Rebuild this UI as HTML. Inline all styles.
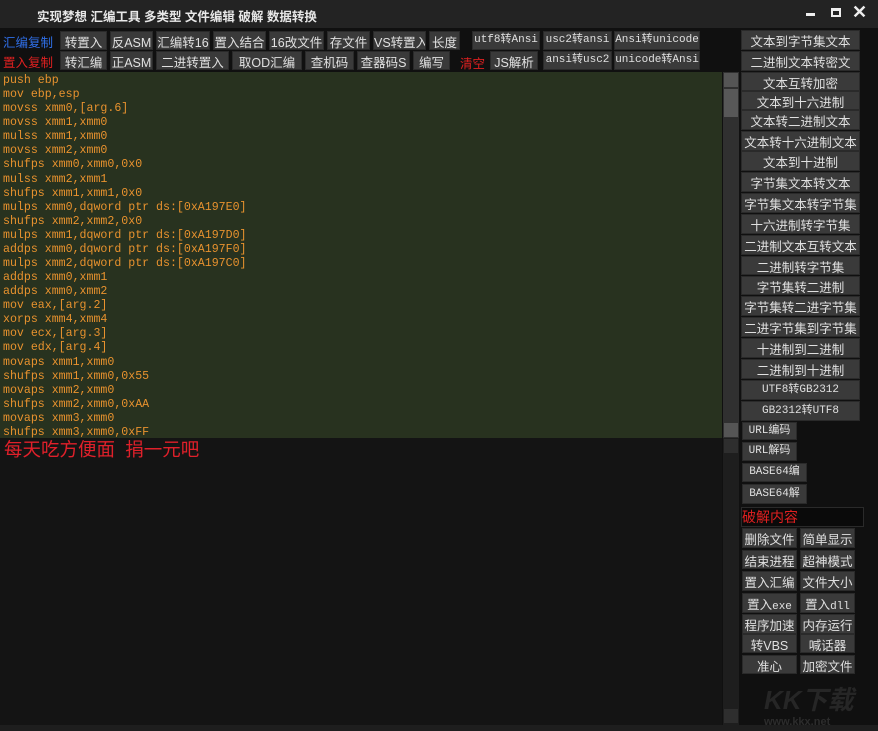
<!DOCTYPE html>
<html><head><meta charset="utf-8"><style>
*{margin:0;padding:0;box-sizing:border-box}
body{width:878px;height:731px;background:#101010;position:relative;overflow:hidden;font-family:"Liberation Sans","Noto Sans CJK SC",sans-serif;color:#ddd}
.b{position:absolute;background:#3a3a3a;color:#e0e0e0;font-size:12.5px;text-align:center;white-space:nowrap;overflow:hidden;border:1px solid #2a2a2a}
.m{font-family:"Liberation Mono","Noto Sans CJK SC",monospace;font-size:11px}
#title{position:absolute;left:0;top:0;width:878px;height:28px;background:#232323;font-weight:bold;font-size:12.5px;color:#e8e8e8;padding:6px 0 0 37px}
#code{position:absolute;left:0;top:72px;width:722px;height:366px;background:#28321f;color:#e8922e;font-family:"Liberation Mono","Noto Sans CJK SC",monospace;font-size:11.6px;line-height:14.08px;padding:2px 0 0 3px;white-space:pre}
#low{position:absolute;left:0;top:438px;width:722px;height:287px;background:#141414;color:#e0202a;font-size:18.5px;padding:0 0 0 4px;line-height:24px;white-space:pre}
.sb{position:absolute;left:723px;width:16px;background:#2a2a2a}
</style></head><body>
<div id="title">实现梦想 汇编工具 多类型 文件编辑 破解 数据转换</div>
<div style="position:absolute;left:806px;top:13px;width:9px;height:3px;background:#eee"></div>
<div style="position:absolute;left:831px;top:8px;width:10px;height:9px;border:2px solid #eee;border-top-width:3px"></div>
<div style="position:absolute;left:852px;top:2px;color:#eee;font-size:18px;font-weight:bold">✕</div>

<div style="position:absolute;left:3px;top:32px;font-size:12.5px;color:#2f6fe8">汇编复制</div>
<div style="position:absolute;left:3px;top:52px;font-size:12.5px;color:#e02020">置入复制</div>
<div class="b" style="left:60px;top:31px;width:47px;height:19px">转置入</div>
<div class="b" style="left:110px;top:31px;width:43px;height:19px">反ASM</div>
<div class="b" style="left:156px;top:31px;width:54px;height:19px">汇编转16</div>
<div class="b" style="left:213px;top:31px;width:53px;height:19px">置入结合</div>
<div class="b" style="left:269px;top:31px;width:55px;height:19px">16改文件</div>
<div class="b" style="left:327px;top:31px;width:43px;height:19px">存文件</div>
<div class="b" style="left:373px;top:31px;width:53px;height:19px">VS转置入</div>
<div class="b" style="left:429px;top:31px;width:31px;height:19px">长度</div>
<div class="b m" style="left:472px;top:31px;width:68px;height:19px;line-height:17px">utf8转Ansi</div>
<div class="b m" style="left:543px;top:31px;width:69px;height:19px;line-height:17px">usc2转ansi</div>
<div class="b m" style="left:614px;top:31px;width:86px;height:19px;line-height:17px">Ansi转unicode</div>

<div class="b" style="left:60px;top:51px;width:47px;height:19px">转汇编</div>
<div class="b" style="left:110px;top:51px;width:43px;height:19px">正ASM</div>
<div class="b" style="left:156px;top:51px;width:73px;height:19px">二进转置入</div>
<div class="b" style="left:232px;top:51px;width:70px;height:19px">取OD汇编</div>
<div class="b" style="left:305px;top:51px;width:49px;height:19px">查机码</div>
<div class="b" style="left:357px;top:51px;width:53px;height:19px">查器码S</div>
<div class="b" style="left:413px;top:51px;width:37px;height:19px">编写</div>
<div style="position:absolute;left:460px;top:53px;font-size:12.5px;color:#e02020">清空</div>
<div class="b" style="left:490px;top:51px;width:48px;height:19px">JS解析</div>
<div class="b m" style="left:543px;top:51px;width:69px;height:19px;line-height:17px">ansi转usc2</div>
<div class="b m" style="left:614px;top:51px;width:86px;height:19px;line-height:17px">unicode转Ansi</div>

<div id="code">push ebp
mov ebp,esp
movss xmm0,[arg.6]
movss xmm1,xmm0
mulss xmm1,xmm0
movss xmm2,xmm0
shufps xmm0,xmm0,0x0
mulss xmm2,xmm1
shufps xmm1,xmm1,0x0
mulps xmm0,dqword ptr ds:[0xA197E0]
shufps xmm2,xmm2,0x0
mulps xmm1,dqword ptr ds:[0xA197D0]
addps xmm0,dqword ptr ds:[0xA197F0]
mulps xmm2,dqword ptr ds:[0xA197C0]
addps xmm0,xmm1
addps xmm0,xmm2
mov eax,[arg.2]
xorps xmm4,xmm4
mov ecx,[arg.3]
mov edx,[arg.4]
movaps xmm1,xmm0
shufps xmm1,xmm0,0x55
movaps xmm2,xmm0
shufps xmm2,xmm0,0xAA
movaps xmm3,xmm0
shufps xmm3,xmm0,0xFF</div>
<div id="low">每天吃方便面  捐一元吧</div>
<div class="sb" style="top:72px;height:366px;background:#303030"></div>
<div style="position:absolute;left:724px;top:73px;width:14px;height:14px;background:#555"></div>
<div style="position:absolute;left:724px;top:89px;width:14px;height:28px;background:#585858"></div>
<div style="position:absolute;left:724px;top:423px;width:14px;height:14px;background:#555"></div>
<div class="sb" style="top:438px;height:287px;background:#1e1e1e"></div>
<div style="position:absolute;left:724px;top:439px;width:14px;height:14px;background:#2e2e2e"></div>
<div style="position:absolute;left:724px;top:709px;width:14px;height:14px;background:#2e2e2e"></div>
<div style="position:absolute;left:0;top:725px;width:878px;height:6px;background:#1e1e1e"></div>

<div class="b" style="left:741px;top:30px;width:119px;height:20px">文本到字节集文本</div>
<div class="b" style="left:741px;top:51px;width:119px;height:20px">二进制文本转密文</div>
<div class="b" style="left:741px;top:72px;width:119px;height:19px">文本互转加密</div>
<div class="b" style="left:741px;top:91px;width:119px;height:19px">文本到十六进制</div>
<div class="b" style="left:741px;top:110px;width:119px;height:20px">文本转二进制文本</div>
<div class="b" style="left:741px;top:131px;width:119px;height:20px">文本转十六进制文本</div>
<div class="b" style="left:741px;top:151px;width:119px;height:20px">文本到十进制</div>
<div class="b" style="left:741px;top:172px;width:119px;height:20px">字节集文本转文本</div>
<div class="b" style="left:741px;top:193px;width:119px;height:20px">字节集文本转字节集</div>
<div class="b" style="left:741px;top:214px;width:119px;height:20px">十六进制转字节集</div>
<div class="b" style="left:741px;top:235px;width:119px;height:20px">二进制文本互转文本</div>
<div class="b" style="left:741px;top:256px;width:119px;height:19px">二进制转字节集</div>
<div class="b" style="left:741px;top:276px;width:119px;height:19px">字节集转二进制</div>
<div class="b" style="left:741px;top:296px;width:119px;height:20px">字节集转二进字节集</div>
<div class="b" style="left:741px;top:317px;width:119px;height:20px">二进字节集到字节集</div>
<div class="b" style="left:741px;top:338px;width:119px;height:20px">十进制到二进制</div>
<div class="b" style="left:741px;top:359px;width:119px;height:20px">二进制到十进制</div>
<div class="b m" style="left:741px;top:380px;width:119px;height:20px;line-height:18px">UTF8转GB2312</div>
<div class="b m" style="left:741px;top:401px;width:119px;height:20px;line-height:18px">GB2312转UTF8</div>
<div class="b m" style="left:742px;top:422px;width:55px;height:18px;line-height:16px">URL编码</div>
<div class="b m" style="left:742px;top:442px;width:55px;height:19px;line-height:17px">URL解码</div>
<div class="b m" style="left:742px;top:463px;width:65px;height:19px;line-height:17px">BASE64编</div>
<div class="b m" style="left:742px;top:484px;width:65px;height:20px;line-height:18px">BASE64解</div>
<div style="position:absolute;left:741px;top:507px;width:123px;height:20px;background:#0a0a0a;border:1px solid #2a2a2a;color:#e02020;font-size:14px;line-height:18px">破解内容</div>
<div class="b" style="left:742px;top:528px;width:55px;height:20px">删除文件</div>
<div class="b" style="left:800px;top:528px;width:55px;height:20px">简单显示</div>
<div class="b" style="left:742px;top:550px;width:55px;height:19px">结束进程</div>
<div class="b" style="left:800px;top:550px;width:55px;height:19px">超神模式</div>
<div class="b" style="left:742px;top:571px;width:55px;height:20px">置入汇编</div>
<div class="b" style="left:800px;top:571px;width:55px;height:20px">文件大小</div>
<div class="b" style="left:742px;top:593px;width:55px;height:20px">置入<span class="m">exe</span></div>
<div class="b" style="left:800px;top:593px;width:55px;height:20px">置入<span class="m">dll</span></div>
<div class="b" style="left:742px;top:614px;width:55px;height:20px">程序加速</div>
<div class="b" style="left:800px;top:614px;width:55px;height:20px">内存运行</div>
<div class="b" style="left:742px;top:634px;width:55px;height:19px">转VBS</div>
<div class="b" style="left:800px;top:634px;width:55px;height:19px">喊话器</div>
<div class="b" style="left:742px;top:655px;width:55px;height:19px">准心</div>
<div class="b" style="left:800px;top:655px;width:55px;height:19px">加密文件</div>
<div style="position:absolute;left:764px;top:680px;font-size:26px;font-weight:bold;color:#262626;font-style:italic">KK下载</div>
<div style="position:absolute;left:764px;top:716px;font-size:11px;font-weight:bold;color:#2c2c2c">www.kkx.net</div>
</body></html>
